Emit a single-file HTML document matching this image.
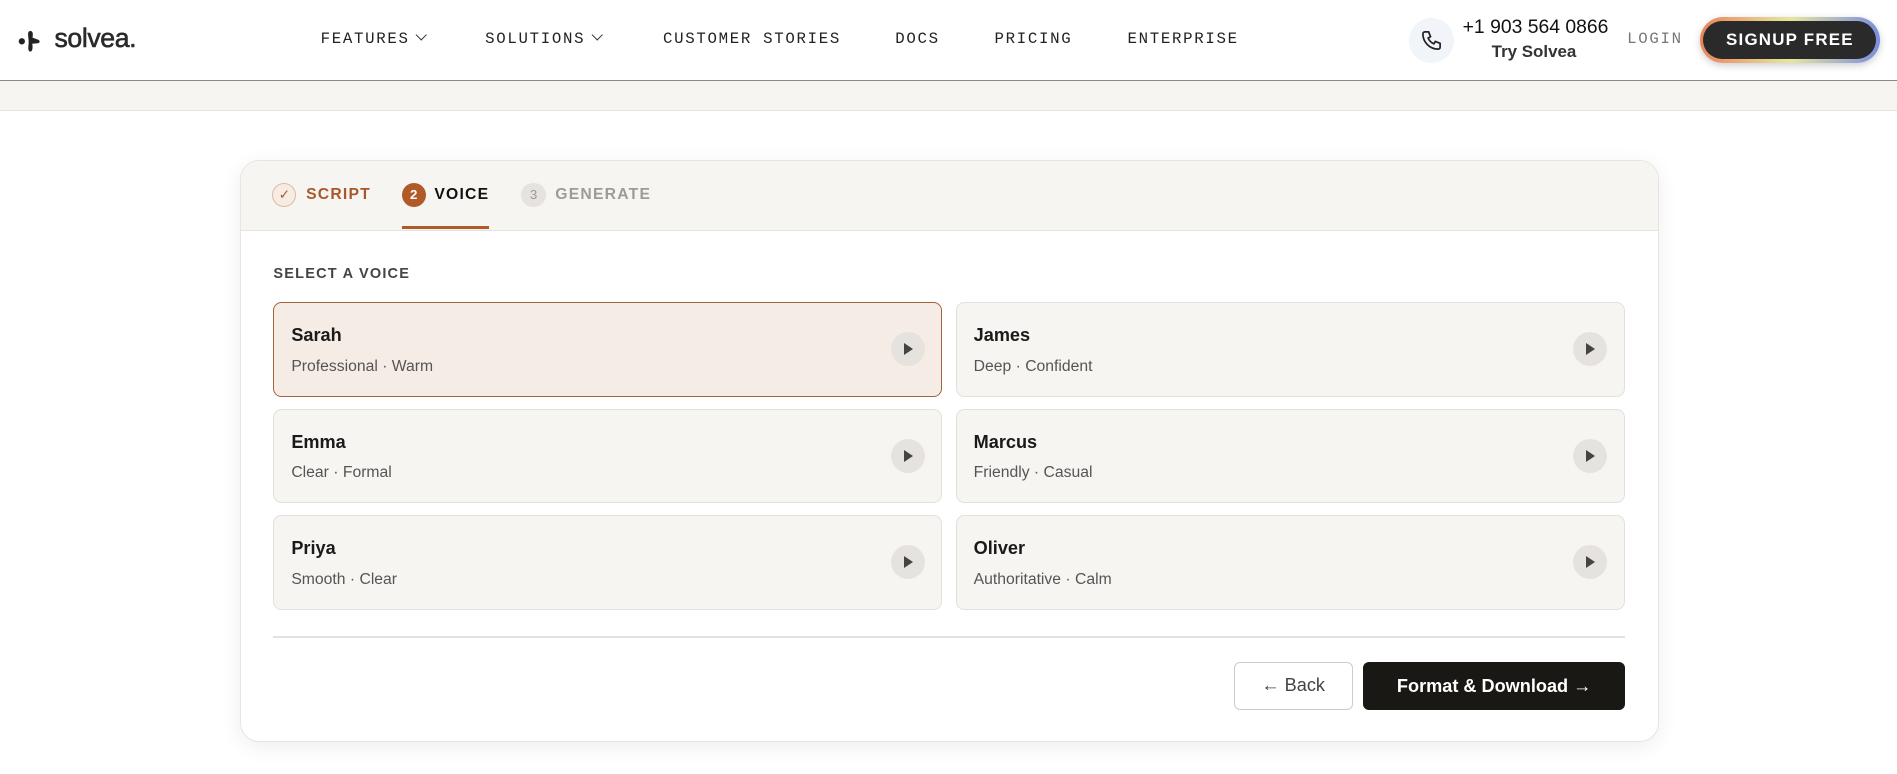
<!DOCTYPE html>
<html><head><meta charset="utf-8"><style>
*{box-sizing:border-box;margin:0;padding:0}
html,body{width:1897px;height:774px;overflow:hidden;background:#fff}
#w{width:1568px;height:640px;zoom:1.2098;position:relative;font-family:"Liberation Sans",Arial,sans-serif;color:#1a1a1a}
.a{position:absolute}
.nav{font-family:"Liberation Mono",monospace;font-size:13px;letter-spacing:1.4px;color:#222;top:25px}
.chev{display:inline-block;width:7px;height:7px;border-right:1.3px solid #333;border-bottom:1.3px solid #333;transform:rotate(45deg);margin-left:6px;position:relative;top:-3px}
.vc{position:absolute;width:553px;height:78px;border:1.5px solid #e3e0db;border-radius:7px;background:#f7f5f2}
.vc b{position:absolute;left:14px;top:18px;font-size:15px}
.vc span{position:absolute;left:14px;top:45px;font-size:13px;color:#555}
.vc i{position:absolute;right:14px;top:24px;width:28px;height:28px;border-radius:50%;background:#e6e3de}
.vc i:after{content:"";position:absolute;left:11px;top:9px;border-left:8px solid #444;border-top:5px solid transparent;border-bottom:5px solid transparent}
.sel{background:#f5ece6;border-color:#a8623a}
.stp{top:154px;font-size:13px;font-weight:bold;letter-spacing:1px}
.cir{position:absolute;top:151px;width:20px;height:20px;border-radius:50%;font-size:11px;text-align:center;line-height:20px}
</style></head><body><div id="w">
<div class="a" style="left:0;top:0;width:1568px;height:67px;border-bottom:1px solid #888"></div>
<svg class="a" style="left:14px;top:23px" width="22" height="22" viewBox="0 0 22 22"><circle cx="4" cy="11" r="2.6" fill="#222"/><path d="M11 2.5c2.2 0 2.4 2.5 1.8 5.5l4.5 1.6c2 .7 1.8 2.8-.2 3L12.6 13c.6 3 .3 6.5-1.6 6.5-2 0-1.8-3.3-1.4-6.5.3-3.5-.8-7.2-.3-9.1.3-1 .9-1.4 1.7-1.4z" fill="#222"/></svg>
<div class="a" style="left:45px;top:19px;font-size:22px;color:#2a2a2a;letter-spacing:-0.3px;-webkit-text-stroke:0.5px #2a2a2a">solvea.</div>
<div class="a nav" style="left:265px">FEATURES<span class="chev"></span></div>
<div class="a nav" style="left:401px">SOLUTIONS<span class="chev"></span></div>
<div class="a nav" style="left:548px">CUSTOMER STORIES</div>
<div class="a nav" style="left:740px">DOCS</div>
<div class="a nav" style="left:822px">PRICING</div>
<div class="a nav" style="left:932px">ENTERPRISE</div>
<div class="a" style="left:1165px;top:15px;width:37px;height:37px;border-radius:50%;background:#f1f4f8"></div>
<svg class="a" style="left:1174px;top:24px" width="19" height="19" viewBox="0 0 24 24" fill="none" stroke="#222" stroke-width="1.8"><path d="M5 3h4l2 5-2.5 1.5a11 11 0 0 0 6 6L16 13l5 2v4a2 2 0 0 1-2 2A16 16 0 0 1 3 5a2 2 0 0 1 2-2z"/></svg>
<div class="a" style="left:1209px;top:13px;font-size:16px;color:#111">+1 903 564 0866</div>
<div class="a" style="left:1233px;top:35px;font-size:14px;font-weight:bold;color:#333">Try Solvea</div>
<div class="a nav" style="left:1345px;color:#777">LOGIN</div>
<div class="a" style="left:1405px;top:14px;width:149px;height:38px;border-radius:19px;background:linear-gradient(90deg,#e8855a,#e6e6a0,#7a8ee0);box-shadow:0 2px 6px rgba(0,0,0,.2)"></div>
<div class="a" style="left:1408px;top:17px;width:143px;height:32px;border-radius:16px;background:#2a2a2a;color:#fff;font-weight:bold;font-size:14px;letter-spacing:1px;text-align:center;line-height:32px">SIGNUP FREE</div>
<div class="a" style="left:0;top:67px;width:1568px;height:25px;background:#f7f5f2;border-bottom:1px solid #e5e2dd"></div>
<div class="a" style="left:198px;top:132px;width:1173px;height:481px;border:1px solid #e8e5e0;border-radius:16px;box-shadow:0 4px 18px rgba(0,0,0,.07);overflow:hidden;background:#fff">
<div style="height:58px;background:#f7f5f2;border-bottom:1px solid #e5e2dd"></div></div>
<div class="cir" style="left:225px;border:1px solid #e0b8a0;background:#f7ece4;color:#a8582a;line-height:18px">✓</div>
<div class="a stp" style="left:253px;color:#a8582a">SCRIPT</div>
<div class="cir" style="left:332px;background:#b05a28;color:#fff;font-weight:bold">2</div>
<div class="a stp" style="left:359px;color:#111">VOICE</div>
<div class="a" style="left:332px;top:187px;width:72px;height:2px;background:#b05a28"></div>
<div class="cir" style="left:431px;background:#e6e3de;color:#999">3</div>
<div class="a stp" style="left:459px;color:#a09a94">GENERATE</div>
<div class="a" style="left:226px;top:220px;font-size:12px;font-weight:bold;letter-spacing:1px;color:#444">SELECT A VOICE</div>
<div class="vc sel" style="left:226px;top:250px"><b>Sarah</b><span>Professional · Warm</span><i></i></div>
<div class="vc" style="left:790px;top:250px"><b>James</b><span>Deep · Confident</span><i></i></div>
<div class="vc" style="left:226px;top:338px"><b>Emma</b><span>Clear · Formal</span><i></i></div>
<div class="vc" style="left:790px;top:338px"><b>Marcus</b><span>Friendly · Casual</span><i></i></div>
<div class="vc" style="left:226px;top:426px"><b>Priya</b><span>Smooth · Clear</span><i></i></div>
<div class="vc" style="left:790px;top:426px"><b>Oliver</b><span>Authoritative · Calm</span><i></i></div>
<div class="a" style="left:226px;top:526px;width:1117px;height:1px;background:#e5e2dd"></div>
<div class="a" style="left:1020px;top:547px;width:98px;height:40px;border:1.5px solid #d0ccc5;border-radius:5px;text-align:center;line-height:37px;font-size:15px;color:#444">← Back</div>
<div class="a" style="left:1127px;top:547px;width:216px;height:40px;border-radius:5px;background:#1a1814;color:#fff;text-align:center;line-height:40px;font-size:15px;font-weight:bold">Format &amp; Download →</div>
</div></body></html>
